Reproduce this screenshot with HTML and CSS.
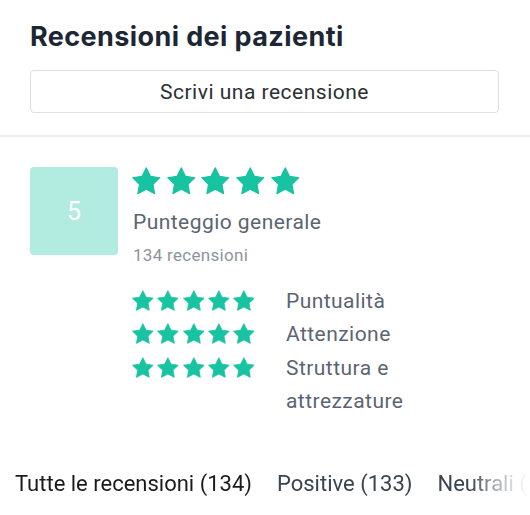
FILE: index.html
```html
<!DOCTYPE html>
<html lang="it">
<head>
<meta charset="utf-8">
<title>Recensioni dei pazienti</title>
<link rel="stylesheet" href="styles.css">
</head>
<body>
<svg width="0" height="0" class="defs" aria-hidden="true">
  <defs>
    <symbol id="star" viewBox="1.5 1.5 21 20">
      <polygon points="12,2 15.09,8.26 22,9.27 17,14.14 18.18,21.02 12,17.77 5.82,21.02 7,14.14 2,9.27 8.91,8.26" stroke-linejoin="round"/>
    </symbol>
  </defs>
</svg>
<section class="head">
  <h1 class="title">Recensioni dei pazienti</h1>
  <button class="write-btn">Scrivi una recensione</button>
</section>
<section class="summary">
  <div class="score-box">5</div>
  <div class="score-info">
    <div class="stars stars-lg">
      <svg><use href="#star"/></svg><svg><use href="#star"/></svg><svg><use href="#star"/></svg><svg><use href="#star"/></svg><svg><use href="#star"/></svg>
    </div>
    <div class="overall">Punteggio generale</div>
    <div class="count">134 recensioni</div>
    <div class="criteria">
      <div class="stars stars-sm"><svg><use href="#star"/></svg><svg><use href="#star"/></svg><svg><use href="#star"/></svg><svg><use href="#star"/></svg><svg><use href="#star"/></svg></div>
      <div class="crit-label">Puntualità</div>
      <div class="stars stars-sm"><svg><use href="#star"/></svg><svg><use href="#star"/></svg><svg><use href="#star"/></svg><svg><use href="#star"/></svg><svg><use href="#star"/></svg></div>
      <div class="crit-label">Attenzione</div>
      <div class="stars stars-sm"><svg><use href="#star"/></svg><svg><use href="#star"/></svg><svg><use href="#star"/></svg><svg><use href="#star"/></svg><svg><use href="#star"/></svg></div>
      <div class="crit-label">Struttura e attrezzature</div>
    </div>
  </div>
</section>
<nav class="tabs">
  <span class="tab tab-active">Tutte le recensioni (134)</span>
  <span class="tab">Positive (133)</span>
  <span class="tab">Neutrali (1)</span>
  <span class="tab">Negative (0)</span>
</nav>
</body>
</html>
```

FILE: styles.css
```css
* { box-sizing: border-box; }
html, body { margin: 0; padding: 0; background: #ffffff; }
body {
  width: 530px;
  height: 515px;
  overflow: hidden;
  font-family: Roboto, "Liberation Sans", sans-serif;
}
.defs { position: absolute; width: 0; height: 0; }

.head {
  padding: 20px 31px 22px 30px;
  border-bottom: 2px solid #eeeff1;
}
.title {
  margin: 0;
  font-family: Inter, "Open Sans", sans-serif;
  font-weight: 700;
  font-size: 27px;
  line-height: 34px;
  color: #1d2633;
  letter-spacing: 0.4px;
}
.write-btn {
  display: block;
  width: 100%;
  height: 43px;
  margin-top: 16px;
  background: #fff;
  border: 1px solid #dcdfe3;
  border-radius: 4px;
  font-family: Roboto, sans-serif;
  font-size: 21px;
  letter-spacing: 0.5px;
  color: #2b2f33;
  padding: 0;
}

.summary {
  display: flex;
  gap: 15px;
  padding: 30px 30px 0 30px;
}
.score-box {
  width: 88px;
  height: 88px;
  flex: none;
  border-radius: 4px;
  background: #b2ebdf;
  color: #fff;
  font-size: 25px;
  display: flex;
  align-items: center;
  justify-content: center;
}
.score-info { display: flex; flex-direction: column; }

.stars { display: flex; fill: #17c3a0; stroke: #17c3a0; stroke-width: 0.8; }
.stars-lg { gap: 6.2px; height: 28px; align-items: center; margin-left: -1px; }
.stars-lg svg { width: 28.5px; height: 27.5px; }
.stars-sm { gap: 3.6px; align-self: start; margin-top: 5px; margin-left: -1px; }
.stars-sm svg { width: 22px; height: 21px; }

.overall {
  margin-top: 15px;
  font-size: 21px;
  line-height: 25px;
  letter-spacing: 0.45px;
  color: #5b6572;
}
.count {
  margin-top: 10px;
  font-size: 17px;
  line-height: 20px;
  letter-spacing: 0.3px;
  color: #8c949e;
}
.criteria {
  margin-top: 20px;
  display: grid;
  grid-template-columns: 122px 160px;
  column-gap: 31px;
}
.crit-label {
  font-size: 21px;
  line-height: 33.3px;
  letter-spacing: 0.45px;
  color: #5b6572;
}

.tabs {
  display: flex;
  gap: 25px;
  padding: 53px 0 0 15px;
  white-space: nowrap;
  overflow: hidden;
  -webkit-mask-image: linear-gradient(to right, #000 0, #000 470px, rgba(0,0,0,0.45) 495px, rgba(0,0,0,0.12) 518px, transparent 530px);
  mask-image: linear-gradient(to right, #000 0, #000 470px, rgba(0,0,0,0.45) 495px, rgba(0,0,0,0.12) 518px, transparent 530px);
}
.tab {
  font-size: 22px;
  line-height: 26px;
  color: #3a4350;
}
.tab-active { color: #1b1b1b; }
```
